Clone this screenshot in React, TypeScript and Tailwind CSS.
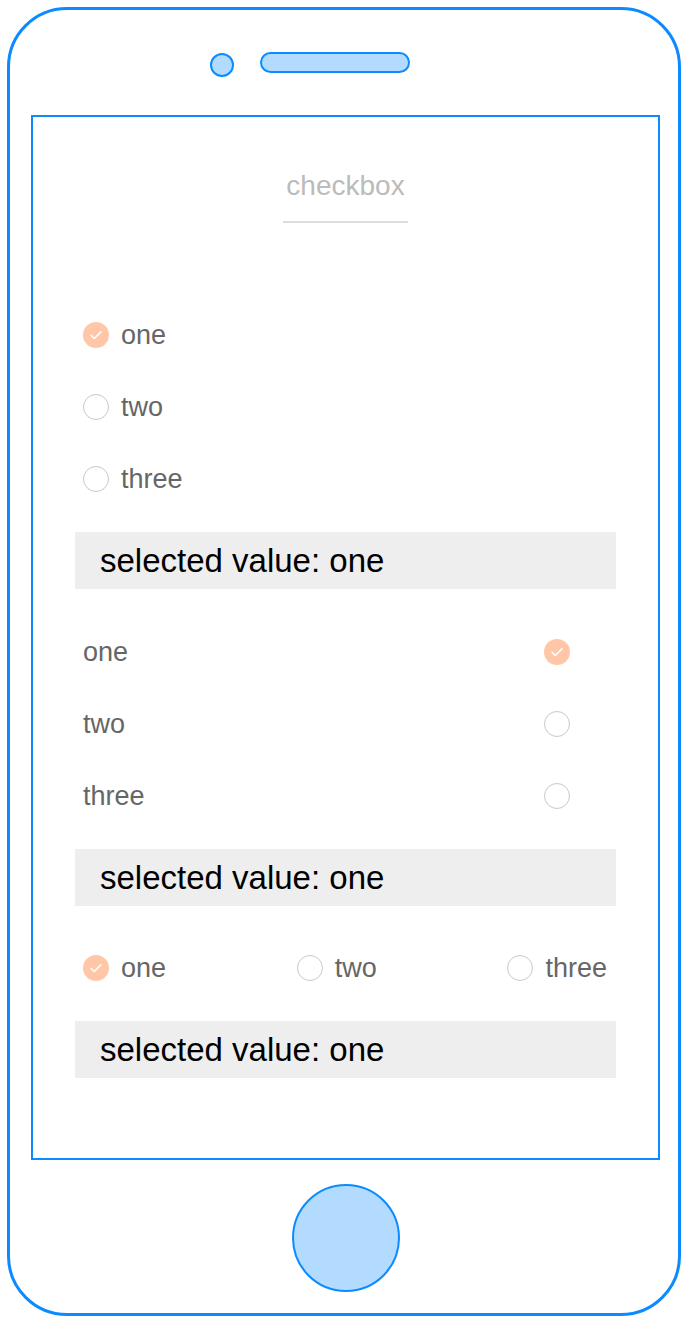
import React, { useState } from 'react';

const options = ['one', 'two', 'three'];

const Check: React.FC<{ checked: boolean }> = ({ checked }) =>
  checked ? (
    <span className="flex h-[26px] w-[26px] shrink-0 items-center justify-center rounded-full bg-[#ffc7a8]">
      <svg width="16" height="16" viewBox="0 0 16 16" fill="none">
        <path d="M3 8.3l3.3 3.2L13 4.8" stroke="#fff" strokeWidth="1.6" strokeLinecap="round" strokeLinejoin="round" />
      </svg>
    </span>
  ) : (
    <span className="block h-[26px] w-[26px] shrink-0 rounded-full border border-[#c9c9c9] bg-white" />
  );

const Selected: React.FC<{ value: string }> = ({ value }) => (
  <div className="mt-[17px] flex h-[57px] items-center bg-[#eeeeee] pl-[25px] text-[33px] text-black">
    selected value: {value}
  </div>
);

const App: React.FC = () => {
  const [a, setA] = useState('one');
  const [b, setB] = useState('one');
  const [c, setC] = useState('one');

  return (
    <div className="h-[1321px] w-[685px] bg-white pl-[7px] pt-[7px] font-['Liberation_Sans',Arial,sans-serif]">
      {/* phone body */}
      <div className="flex h-[1309px] w-[674px] flex-col rounded-[60px] border-[3px] border-[#0b8bff]">
        {/* camera + speaker */}
        <div className="flex h-[105px] items-start pl-[200px] pt-[42px]">
          <span className="mt-[1px] block h-[24px] w-[24px] rounded-full border-2 border-[#0b8bff] bg-[#b2dbff]" />
          <span className="ml-[26px] block h-[21px] w-[150px] rounded-full border-2 border-[#0b8bff] bg-[#b2dbff]" />
        </div>

        {/* screen */}
        <div className="ml-[21px] flex h-[1045px] w-[629px] flex-col border-2 border-[#0b8bff] px-[42px]">
          <div className="flex justify-center pt-[55px]">
            <div className="border-b-2 border-[#dddddd] px-[3px] pb-[21px] text-[28px] leading-[28px] text-[#bbbbbb]">
              checkbox
            </div>
          </div>

          {/* list, icon left */}
          <div className="mt-[76px]">
            {options.map((o) => (
              <div key={o} className="flex h-[72px] cursor-pointer items-center gap-[12px] px-[8px]" onClick={() => setA(o)}>
                <Check checked={a === o} />
                <span className="text-[27px] text-[#666666]">{o}</span>
              </div>
            ))}
          </div>
          <Selected value={a} />

          {/* list, icon right */}
          <div className="mt-[27px]">
            {options.map((o) => (
              <div key={o} className="flex h-[72px] cursor-pointer items-center justify-between pl-[8px] pr-[46px]" onClick={() => setB(o)}>
                <span className="text-[27px] text-[#666666]">{o}</span>
                <Check checked={b === o} />
              </div>
            ))}
          </div>
          <Selected value={b} />

          {/* inline */}
          <div className="mt-[26px] flex h-[72px] items-center justify-between pl-[8px] pr-[9px]">
            {options.map((o) => (
              <div key={o} className="flex cursor-pointer items-center gap-[12px]" onClick={() => setC(o)}>
                <Check checked={c === o} />
                <span className="text-[27px] text-[#666666]">{o}</span>
              </div>
            ))}
          </div>
          <Selected value={c} />
        </div>

        {/* home button */}
        <div className="flex justify-center pl-[3px] pt-[24px]">
          <span className="block h-[108px] w-[108px] rounded-full border-2 border-[#0b8bff] bg-[#b2dbff]" />
        </div>
      </div>
    </div>
  );
};

export default App;
